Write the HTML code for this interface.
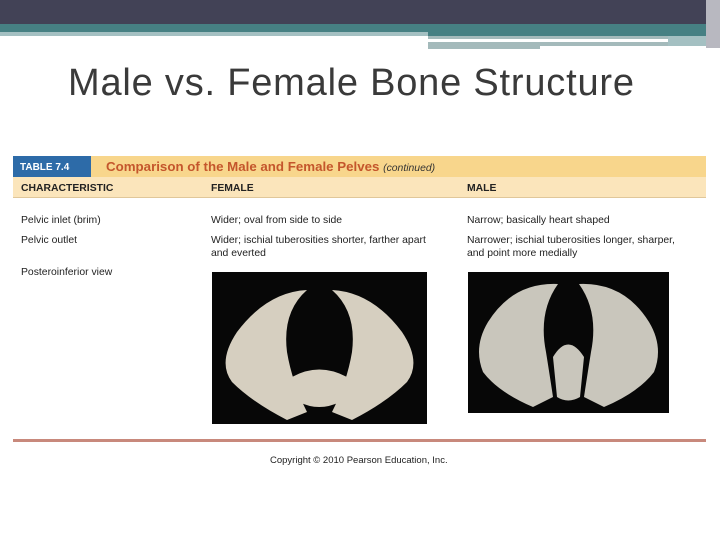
<!DOCTYPE html>
<html><head><style>
*{margin:0;padding:0;box-sizing:border-box}
body{width:720px;height:540px;background:#fff;position:relative;overflow:hidden;font-family:"Liberation Sans",sans-serif}
.a{position:absolute}
.t{position:absolute;font-size:10.4px;color:#222;line-height:13px}
</style></head><body>
<div class="a" style="left:0;top:0;width:720px;height:24px;background:#424256"></div>
<div class="a" style="left:0;top:24px;width:720px;height:8px;background:#468083"></div>
<div class="a" style="left:0;top:32px;width:428px;height:4px;background:#a4c0c2"></div>
<div class="a" style="left:428px;top:32px;width:292px;height:4px;background:#468083"></div>
<div class="a" style="left:428px;top:36px;width:240px;height:3px;background:#a4babb"></div>
<div class="a" style="left:428px;top:42px;width:240px;height:4px;background:#a4babb"></div>
<div class="a" style="left:428px;top:42px;width:112px;height:7px;background:#a4babb"></div>
<div class="a" style="left:668px;top:36px;width:52px;height:10px;background:#a4c0c2"></div>
<div class="a" style="left:706px;top:0;width:14px;height:48px;background:#b8b8c0"></div>
<div class="a" style="left:68px;top:62px;font-size:38px;color:#3a3a3a;letter-spacing:0.8px">Male vs. Female Bone Structure</div>

<div class="a" style="left:13px;top:156px;width:693px;height:21px;background:#f8d68c"></div>
<div class="a" style="left:13px;top:156px;width:78px;height:21px;background:#2d6ba8"></div>
<div class="a" style="left:20px;top:162px;font-size:10px;font-weight:bold;color:#fff">TABLE 7.4</div>
<div class="a" style="left:106px;top:159px;font-size:13.3px;font-weight:bold;color:#c4562c">Comparison of the Male and Female Pelves <span style="font-size:10.4px;font-style:italic;font-weight:normal;color:#333">(continued)</span></div>
<div class="a" style="left:13px;top:177px;width:693px;height:21px;background:#fbe5bb;border-bottom:1px solid #e0c79a"></div>
<div class="t" style="left:21px;top:182px;font-weight:bold">CHARACTERISTIC</div>
<div class="t" style="left:211px;top:182px;font-weight:bold">FEMALE</div>
<div class="t" style="left:467px;top:182px;font-weight:bold">MALE</div>
<div class="t" style="left:21px;top:214px">Pelvic inlet (brim)</div>
<div class="t" style="left:21px;top:234px">Pelvic outlet</div>
<div class="t" style="left:21px;top:266px">Posteroinferior view</div>
<div class="t" style="left:211px;top:214px">Wider; oval from side to side</div>
<div class="t" style="left:211px;top:234px">Wider; ischial tuberosities shorter, farther apart<br>and everted</div>
<div class="t" style="left:467px;top:214px">Narrow; basically heart shaped</div>
<div class="t" style="left:467px;top:234px">Narrower; ischial tuberosities longer, sharper,<br>and point more medially</div>

<svg class="a" style="left:212px;top:272px" width="215" height="152" viewBox="0 0 215 152">
<rect width="215" height="152" fill="#070707"/>
<g fill="#d6cfc0">
<path d="M25 60 Q55 20 95 18 Q70 40 75 80 Q80 110 95 140 L75 148 Q40 130 20 110 Q5 90 25 60Z"/>
<path d="M190 60 Q160 20 120 18 Q145 40 140 80 Q135 110 120 140 L140 148 Q175 130 195 110 Q210 90 190 60Z"/>
<path d="M80 105 Q107 90 135 105 L128 130 Q107 140 87 130Z"/>
</g>
</svg>
<svg class="a" style="left:468px;top:272px" width="201" height="141" viewBox="0 0 201 141">
<rect width="201" height="141" fill="#070707"/>
<g fill="#c9c6bc">
<path d="M20 50 Q45 10 90 12 Q70 40 78 80 Q82 105 85 125 L65 135 Q30 120 15 100 Q5 75 20 50Z"/>
<path d="M181 50 Q156 10 111 12 Q131 40 123 80 Q119 105 116 125 L136 135 Q171 120 186 100 Q196 75 181 50Z"/>
<path d="M85 85 Q100 60 116 85 L112 125 Q100 132 89 125Z"/>
</g>
</svg>

<div class="a" style="left:13px;top:439px;width:693px;height:3px;background:#c8897c"></div>
<div class="a" style="left:270px;top:455px;font-size:9.5px;color:#222">Copyright © 2010 Pearson Education, Inc.</div>
</body></html>
